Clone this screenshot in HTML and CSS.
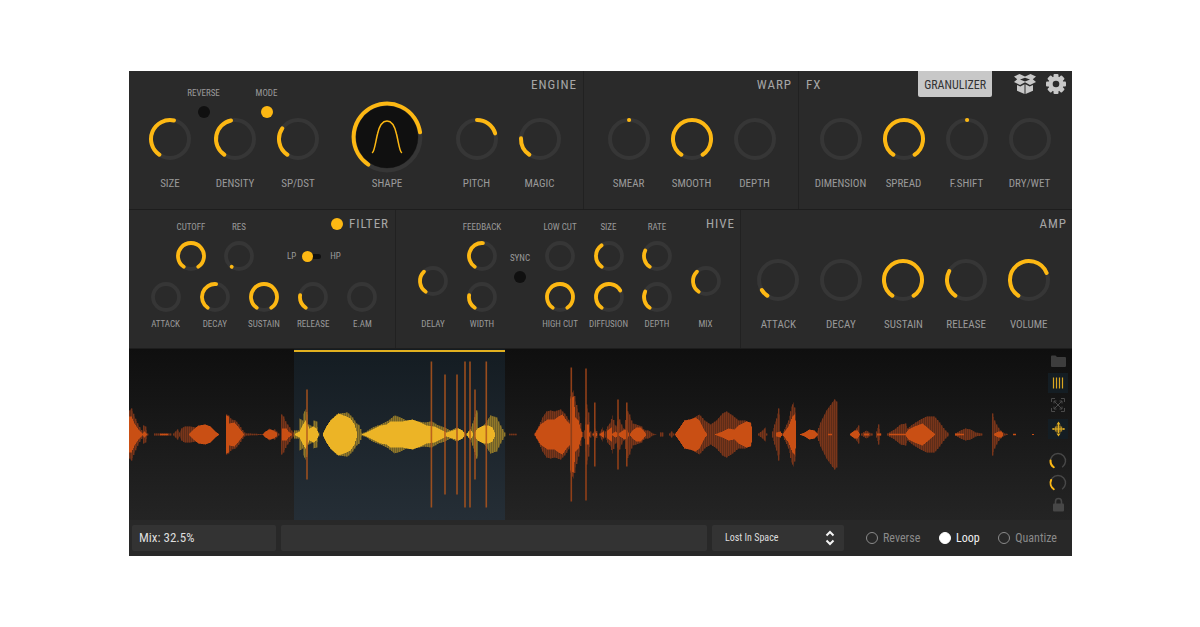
FILE: index.html
```html
<!DOCTYPE html>
<html lang="en">
<head>
<meta charset="utf-8">
<title>Granulizer</title>
<link rel="stylesheet" href="styles.css">
</head>
<body>
<main class="plugin">
  <div class="rack rack-top">
    <section class="module engine">
      <header class="module-head">
        <div class="toggles">
          <label class="toggle">REVERSE<input type="checkbox" class="led"></label>
          <label class="toggle">MODE<input type="checkbox" class="led" checked></label>
        </div>
        <h2 class="title">ENGINE</h2>
      </header>
      <div class="controls">
        <label class="control"><span class="dial"><input type="range" min="0" max="292" value="158"></span>SIZE</label>
        <label class="control"><span class="dial"><input type="range" min="0" max="292" value="134"></span>DENSITY</label>
        <label class="control"><span class="dial"><input type="range" min="0" max="292" value="90"></span>SP/DST</label>
        <label class="control"><span class="dial" data-kind="shape"><input type="range" min="0" max="292" value="228"></span>SHAPE</label>
        <label class="control"><span class="dial" data-origin="146"><input type="range" min="0" max="292" value="219"></span>PITCH</label>
        <label class="control"><span class="dial"><input type="range" min="0" max="292" value="58"></span>MAGIC</label>
      </div>
    </section>
    <section class="module warp">
      <header class="module-head"><h2 class="title">WARP</h2></header>
      <div class="controls">
        <label class="control"><span class="dial" data-origin="146"><input type="range" min="0" max="292" value="146"></span>SMEAR</label>
        <label class="control"><span class="dial"><input type="range" min="0" max="292" value="292"></span>SMOOTH</label>
        <label class="control"><span class="dial"><input type="range" min="0" max="292" value="0"></span>DEPTH</label>
      </div>
    </section>
    <section class="module fx">
      <header class="module-head">
        <h2 class="title">FX</h2>
        <nav class="menu">
          <button class="preset" type="button">GRANULIZER</button>
          <button class="icon-button" type="button" aria-label="Library">
            <svg width="24" height="24" viewBox="0 0 24 24">
              <path fill="#c8c8c8" d="M6.500 2 12 4.600 17.500 2 23 4.500 19.800 7.300 23 10 17 12.900 12 10.300 7 12.900 1 10 4.200 7.300 1 4.500zM12 5.800 7 7.600 12 9.600 17 7.600z"/>
              <path fill="#c8c8c8" d="M4 13 7.300 14.500 11.500 12.300V22L4 18.700zM20 13 16.700 14.500 12.500 12.300V22L20 18.700z"/>
            </svg>
          </button>
          <button class="icon-button" type="button" aria-label="Settings">
            <svg width="24" height="24" viewBox="-12 -12 24 24">
              <g fill="#c8c8c8">
                <rect x="-2.500" y="-10" width="5" height="20" rx="1"/>
                <rect x="-2.500" y="-10" width="5" height="20" rx="1" transform="rotate(45)"/>
                <rect x="-2.500" y="-10" width="5" height="20" rx="1" transform="rotate(90)"/>
                <rect x="-2.500" y="-10" width="5" height="20" rx="1" transform="rotate(135)"/>
                <circle r="7.600"/>
              </g>
              <circle r="3.300" fill="#2a2a2a"/>
            </svg>
          </button>
        </nav>
      </header>
      <div class="controls">
        <label class="control"><span class="dial"><input type="range" min="0" max="292" value="0"></span>DIMENSION</label>
        <label class="control"><span class="dial"><input type="range" min="0" max="292" value="292"></span>SPREAD</label>
        <label class="control"><span class="dial" data-origin="146"><input type="range" min="0" max="292" value="146"></span>F.SHIFT</label>
        <label class="control"><span class="dial"><input type="range" min="0" max="292" value="0"></span>DRY/WET</label>
      </div>
    </section>
  </div>

  <div class="rack rack-bottom">
    <section class="module filter">
      <div class="filter-upper">
        <label class="control small above"><span class="dial"><input type="range" min="0" max="292" value="292"></span>CUTOFF</label>
        <label class="control small above"><span class="dial" data-dot="yes"><input type="range" min="0" max="292" value="0"></span>RES</label>
        <div class="filter-side">
          <div class="filter-title">
            <input type="checkbox" class="led" checked aria-label="Filter on">
            <h2 class="title">FILTER</h2>
          </div>
          <label class="switch">LP<input type="checkbox" class="slide">HP</label>
        </div>
      </div>
      <div class="filter-lower">
        <label class="control small"><span class="dial"><input type="range" min="0" max="292" value="0"></span>ATTACK</label>
        <label class="control small"><span class="dial"><input type="range" min="0" max="292" value="151"></span>DECAY</label>
        <label class="control small"><span class="dial"><input type="range" min="0" max="292" value="292"></span>SUSTAIN</label>
        <label class="control small"><span class="dial"><input type="range" min="0" max="292" value="64"></span>RELEASE</label>
        <label class="control small"><span class="dial"><input type="range" min="0" max="292" value="0"></span>E.AM</label>
      </div>
    </section>
    <section class="module hive">
      <div class="hive-column single">
        <label class="control small tall"><span class="dial"><input type="range" min="0" max="292" value="102"></span>DELAY</label>
      </div>
      <div class="hive-column">
        <label class="control small above"><span class="dial"><input type="range" min="0" max="292" value="150"></span>FEEDBACK</label>
        <label class="control small"><span class="dial"><input type="range" min="0" max="292" value="64"></span>WIDTH</label>
      </div>
      <div class="hive-column sync">
        <label class="toggle">SYNC<input type="checkbox" class="led"></label>
      </div>
      <div class="hive-column">
        <label class="control small above"><span class="dial"><input type="range" min="0" max="292" value="0"></span>LOW CUT</label>
        <label class="control small"><span class="dial"><input type="range" min="0" max="292" value="292"></span>HIGH CUT</label>
      </div>
      <div class="hive-column">
        <label class="control small above"><span class="dial"><input type="range" min="0" max="292" value="111"></span>SIZE</label>
        <label class="control small"><span class="dial"><input type="range" min="0" max="292" value="206"></span>DIFFUSION</label>
      </div>
      <div class="hive-column">
        <label class="control small above"><span class="dial"><input type="range" min="0" max="292" value="81"></span>RATE</label>
        <label class="control small"><span class="dial"><input type="range" min="0" max="292" value="81"></span>DEPTH</label>
      </div>
      <div class="hive-column last">
        <h2 class="title">HIVE</h2>
        <label class="control small tall"><span class="dial"><input type="range" min="0" max="292" value="102"></span>MIX</label>
      </div>
    </section>
    <section class="module amp">
      <header class="module-head"><h2 class="title">AMP</h2></header>
      <div class="controls">
        <label class="control"><span class="dial"><input type="range" min="0" max="292" value="24"></span>ATTACK</label>
        <label class="control"><span class="dial"><input type="range" min="0" max="292" value="0"></span>DECAY</label>
        <label class="control"><span class="dial"><input type="range" min="0" max="292" value="292"></span>SUSTAIN</label>
        <label class="control"><span class="dial"><input type="range" min="0" max="292" value="84"></span>RELEASE</label>
        <label class="control"><span class="dial"><input type="range" min="0" max="292" value="214"></span>VOLUME</label>
      </div>
    </section>
  </div>

  <section class="sample" aria-label="Sample">
    <svg class="wave" viewBox="129 349 943 171" preserveAspectRatio="none">
      <defs>
        <linearGradient id="region" x1="0" y1="0" x2="0" y2="1">
          <stop offset="0" stop-color="#141c22"/><stop offset="1" stop-color="#252e36"/>
        </linearGradient>
      </defs>
      <rect x="294" y="349" width="211" height="171" fill="url(#region)"/>
      <rect x="294" y="350" width="211" height="2" fill="#e0b020"/>
      <path id="peak-fill" fill="#78351a" fill-opacity="0.55"/>
      <path id="peak" fill="#78351a"/>
      <path id="body" fill="#c94f14"/>
      <path id="peak-selected-fill" fill="#917829" fill-opacity="0.55"/>
      <path id="peak-selected" fill="#917829"/>
      <path id="body-selected" fill="#ecb426"/>
      <path id="spikes" fill="#8f3f18"/>
      <path id="spikes-selected" fill="#b0561c" fill-opacity="0.85"/>
    </svg>
    <div class="tools">
      <button class="tool" type="button" aria-label="Open">
        <svg width="20" height="20" viewBox="0 0 20 20"><path fill="#3d3d3d" d="M3 5.500q0-1 1-1h3.500l1.500 1.500H17q1 0 1 1v8q0 1-1 1H4q-1 0-1-1z"/></svg>
      </button>
      <button class="tool active" type="button" aria-label="Grains">
        <svg width="20" height="20" viewBox="0 0 20 20"><path stroke="#d9a520" stroke-width="1.200" d="M5.500 4.500v11M8.500 4.500v11M11.500 4.500v11M14.500 4.500v11"/></svg>
      </button>
      <button class="tool" type="button" aria-label="Fit">
        <svg width="20" height="20" viewBox="0 0 20 20"><path fill="none" stroke="#4a4a4a" d="M3.500 7V3.500H7M13 3.500h3.500V7M16.500 13v3.500H13M7 16.500H3.500V13M6 6l8 8M14 6l-8 8M6 8.500V6h2.500M11.500 6H14v2.500M14 11.500V14h-2.500M8.500 14H6v-2.500"/></svg>
      </button>
      <button class="tool active apart" type="button" aria-label="Scale">
        <svg width="20" height="20" viewBox="0 0 20 20"><path stroke="#a98525" stroke-width="1.300" d="M5.500 9v2M7.500 7.500v5M9 6.500v7M12 6.500v7M13.500 7.500v5M15.500 9v2"/><path fill="#e0ae22" d="M8.500 5.500 10.500 2.500 12.500 5.500zM8.500 14.500l2 3 2-3zM9.900 5h1.200v10H9.900z"/><path stroke="#e0ae22" d="M4 10h13"/></svg>
      </button>
      <label class="tool far"><span class="dial" data-kind="mini"><input type="range" min="0" max="292" value="60" aria-label="Attack shape"></span></label>
      <label class="tool"><span class="dial" data-kind="mini"><input type="range" min="0" max="292" value="80" aria-label="Release shape"></span></label>
      <button class="tool" type="button" aria-label="Lock">
        <svg width="20" height="20" viewBox="0 0 20 20"><rect x="5" y="8.500" width="11" height="8" rx="1" fill="#474747"/><path fill="none" stroke="#474747" stroke-width="1.600" d="M7.500 9V6.500a3 3 0 0 1 6 0V9"/></svg>
      </button>
    </div>
  </section>

  <footer class="status">
    <output class="field readout">Mix: 32.5%</output>
    <input class="field message" type="text" aria-label="Message" readonly>
    <div class="picker">
      <select class="field" aria-label="Preset"><option>Lost In Space</option></select>
      <svg class="chevrons" width="10" height="16" viewBox="0 0 10 16"><path fill="none" stroke="#f4f4f4" stroke-width="2" d="M1.500 5.500 5 2l3.500 3.500M1.500 10.500 5 14l3.500-3.500"/></svg>
    </div>
    <div class="playback">
      <label class="choice"><input type="radio" name="playback" class="round">Reverse</label>
      <label class="choice on"><input type="radio" name="playback" class="round" checked>Loop</label>
      <label class="choice"><input type="radio" name="playback" class="round">Quantize</label>
    </div>
  </footer>
</main>
<script src="script.js"></script>
</body>
</html>
```
FILE: styles.css
```css
* { box-sizing: border-box; }

body {
  margin: 0;
  padding: 71px 128px 71px 129px;
  background: #fff;
  color: #9a9a9a;
  font-family: "Liberation Sans Narrow", "Roboto Condensed", "Open Sans Condensed", "Liberation Sans", sans-serif;
  font-size: 11px;
  line-height: 14px;
}

button, input, select, output { font: inherit; color: inherit; margin: 0; }
button { border: 0; padding: 0; background: none; display: block; }
svg { display: block; }

.plugin { background: #2a2a2a; }

.rack { display: grid; border-bottom: 1px solid #1d1d1d; }
.rack-top { grid-template-columns: 455fr 215fr 273fr; }
.rack-bottom { grid-template-columns: 267fr 345fr 331fr; }

.module { min-width: 0; min-height: 138px; border-right: 1px solid #212121; }
.module:last-child { border-right: 0; }

.module-head {
  display: flex;
  justify-content: space-between;
  height: 47px;
  padding: 0 6px;
}
.warp .module-head, .amp .module-head { justify-content: flex-end; }
.fx .module-head { padding: 0 4px 0 7px; }
.amp .module-head { height: 49px; padding-right: 5px; }

.title {
  margin: 6px 0 0;
  font-size: 13px;
  font-weight: 400;
  line-height: 16px;
  letter-spacing: 1px;
  color: #a6a6a6;
}

.controls { display: grid; justify-items: center; }
.engine .controls { grid-template-columns: 82fr 48fr 78fr 100fr 79fr 47fr 20fr; }
.warp .controls { grid-template-columns: repeat(3, 63fr); padding: 0 12px 0 13px; }
.fx .controls { grid-template-columns: repeat(4, 63fr); padding: 0 11px 0 10px; }
.amp .controls { grid-template-columns: repeat(5, 63fr); padding: 0 12px 0 6px; }

.control {
  display: flex;
  flex-direction: column;
  align-items: center;
  gap: 17px;
  width: 0;
  white-space: nowrap;
}
.engine .control, .warp .control, .fx .control, .amp .control { gap: 18px; }

.dial {
  position: relative;
  display: flex;
  align-items: center;
  justify-content: center;
  width: 42px;
  height: 41px;
  flex: none;
}
.dial svg { flex: none; }
.dial input {
  position: absolute;
  inset: 0;
  width: 100%;
  height: 100%;
  opacity: 0;
}
.dial[data-kind="shape"] svg { margin-bottom: 4px; }
.dial[data-kind="mini"] { width: 20px; height: 20px; }

.track { fill: none; stroke: #363636; }
.dial[data-kind="mini"] .track { stroke: #484848; }
.arc { fill: none; stroke: #fdb813; stroke-linecap: round; }

.small { font-size: 9px; line-height: 12px; gap: 6px; }
.small .dial { width: 30px; height: 30px; }
.above { flex-direction: column-reverse; gap: 8px; }

.toggles { display: flex; padding: 16px 0 0 37px; }
.toggle {
  display: flex;
  flex-direction: column;
  align-items: center;
  gap: 7px;
  font-size: 9px;
  line-height: 12px;
}
.toggles .toggle { width: 63px; }
.led {
  appearance: none;
  width: 12px;
  height: 12px;
  border-radius: 50%;
  background: #101010;
}
.led:checked { background: #fdb813; }

.menu { display: flex; align-items: flex-start; gap: 7px; }
.preset {
  height: 26px;
  padding: 2px 6px 0;
  margin-right: 14px;
  border-radius: 0 0 2px 2px;
  background: #c8c8c8;
  color: #333;
  font-size: 12px;
}
.icon-button { width: 24px; height: 24px; margin-top: 1px; }

.filter-upper {
  display: grid;
  grid-template-columns: 48fr 48fr 128fr;
  justify-items: center;
  padding: 11px 4px 0 38px;
}
.filter-lower {
  display: grid;
  grid-template-columns: repeat(5, 49fr);
  justify-items: center;
  padding: 11px 8px 0 12px;
}
.filter-side { justify-self: stretch; }
.filter-title { display: flex; justify-content: flex-end; align-items: center; gap: 6px; margin-top: -5px; padding-right: 2px; }
.filter-title .title { margin: 0; }
.switch {
  display: flex;
  align-items: center;
  gap: 6px;
  margin: 18px 0 0 24px;
  font-size: 9px;
  line-height: 12px;
}
.slide {
  appearance: none;
  display: flex;
  align-items: center;
  width: 19px;
  height: 5px;
  margin-right: 3px;
  border-radius: 3px;
  background: #101010;
}
.slide::before {
  content: "";
  flex: none;
  width: 11px;
  height: 11px;
  border-radius: 50%;
  background: #fdb813;
}
.slide:checked { justify-content: flex-end; }

.hive {
  display: grid;
  grid-template-columns:
    minmax(0, 54fr) minmax(0, 44fr) minmax(0, 32fr) minmax(0, 48fr)
    minmax(0, 49fr) minmax(0, 48fr) minmax(0, 49fr);
  padding: 11px 10px 0 10px;
}
.hive-column {
  display: flex;
  flex-direction: column;
  align-items: center;
  gap: 11px;
}
.hive .tall { gap: 22px; }
.single { padding-top: 45px; }
.hive .last { gap: 34px; }
.last .title { margin: -5px -5px 0 0; align-self: flex-end; }
.sync { padding-top: 31px; }

.sample {
  display: grid;
  grid-template-columns: 100%;
  background: linear-gradient(#0f0f0f, #242424);
}
.wave { grid-area: 1 / 1; width: 100%; height: 171px; }
.tools {
  grid-area: 1 / 1;
  justify-self: end;
  display: flex;
  flex-direction: column;
  gap: 2px;
  padding: 2px 4px 0 0;
}
.tool { width: 20px; height: 20px; }
.active { background: #141d23; }
.apart { margin-top: 2px; }
.far { margin-top: 10px; }

.status {
  display: grid;
  grid-template-columns: 144fr 426fr 132fr 223fr;
  gap: 5px;
  padding: 5px 0 5px 3px;
  background: #282828;
}
.field {
  display: block;
  width: 100%;
  min-width: 0;
  height: 26px;
  padding: 0 7px;
  border: 0;
  border-radius: 2px;
  background: #333;
  color: #dedede;
  line-height: 26px;
}
.readout { font-size: 13px; }
.picker { display: grid; align-items: center; }
.picker .field { grid-area: 1 / 1; appearance: none; padding: 0 13px; font-size: 10px; }
.chevrons { grid-area: 1 / 1; justify-self: end; margin-right: 9px; pointer-events: none; }
.playback {
  display: flex;
  align-items: center;
  justify-content: space-between;
  padding: 0 15px 0 17px;
  font-size: 12px;
}
.choice { display: flex; align-items: center; gap: 5px; color: #8a8a8a; }
.on { color: #f0f0f0; }
.round {
  appearance: none;
  width: 12px;
  height: 12px;
  border: 1px solid #8a8a8a;
  border-radius: 50%;
}
.round:checked { border-color: #fff; background: #fff; }
```
FILE: script.js
```js
const START = 124;
const SWEEP = 292;
const sizes = {
  large: { box: 44, r: 19, width: 4 },
  small: { box: 32, r: 13, width: 3.8 },
  shape: { box: 72, r: 33.4, width: 4 },
  mini: { box: 20, r: 7.5, width: 1.4 }
};

function point(r, degrees) {
  const a = degrees * Math.PI / 180;
  return (r * Math.cos(a)).toFixed(2) + " " + (r * Math.sin(a)).toFixed(2);
}

function arc(r, from, to) {
  return `M${point(r, START + from)}A${r} ${r} 0 ${to - from > 180 ? 1 : 0} 1 ${point(r, START + to)}`;
}

function drawDial(dial) {
  const old = dial.querySelector("svg");
  if (old) old.remove();
  const kind = dial.dataset.kind || (dial.closest(".small") ? "small" : "large");
  const { box, r, width } = sizes[kind];
  const value = Number(dial.querySelector("input").value);
  const origin = Number(dial.dataset.origin || 0);
  let art = kind === "mini"
    ? `<path class="track" stroke-width="${width}" d="${arc(r, 0, SWEEP)}"/>`
    : `<circle class="track" r="${r}" stroke-width="${width}"/>`;
  if (kind === "shape") {
    art += `<circle r="31" fill="#101010"/><path fill="none" stroke="#fdb813" stroke-width="1.5" stroke-linecap="round" d="M-14.5 15.5C-12.5 14-11.5 5-9.5-3C-7.5-12-5-16 0-16S7.5-12 9.5-3C11.5 5 12.5 14 14.5 15.5"/>`;
  }
  if (value !== origin || dial.dataset.origin || dial.dataset.dot) {
    const low = Math.min(value, origin);
    const high = Math.max(value, origin, low + 0.5);
    art += `<path class="arc" stroke-width="${kind === "mini" ? 2 : width}" d="${arc(r, low, high)}"/>`;
  }
  dial.insertAdjacentHTML("afterbegin",
    `<svg width="${box}" height="${box}" viewBox="${-box / 2} ${-box / 2} ${box} ${box}">${art}</svg>`);
}

document.querySelectorAll(".dial").forEach(dial => {
  drawDial(dial);
  dial.querySelector("input").addEventListener("input", () => drawDial(dial));
});

/* Waveform envelopes: runs of x, half height. */
const peak = [
  [129,24, 131,26, 134,18, 138,9, 142,3, 143,9, 145,8, 147,1],
  [154,1, 170,1],
  [173,1, 177,5, 179,2, 181,6, 184,8, 190,8, 195,7],
  [226,20, 228,19, 231,15, 235,14, 239,9, 243,3, 245,1, 262,0.5],
  [264,2, 269,6, 273,4, 274,5, 278,1],
  [281,20, 283,18, 286,11, 288,9, 291,4, 294,1],
  [509,0.7, 516,0.7],
  [534,1, 538,8, 542,17, 546,23, 550,24, 554,23, 560,25, 565,20, 569,13, 570,38, 573,44, 575,33, 577,26, 579,18, 581,5, 583,0],
  [584,4, 586,30, 588,22, 590,3],
  [592,1, 595,6, 597,1], [599,1, 602,7, 604,1],
  [605,3, 607,8, 610,12, 612,19, 614,10, 616,8, 618,18, 620,12, 624,4, 626,25, 629,20, 632,11, 636,10, 641,8, 644,4, 648,4, 652,1, 656,0],
  [660,2, 662,2], [669,1, 671,3, 673,1],
  [676,2, 684,14, 692,16, 699,20, 704,14, 710,10, 716,14, 722,21, 726,23, 732,19, 738,14, 745,14, 750,11, 751,8],
  [758,1, 762,4, 765,7, 766,1],
  [772,3, 774,10, 776,16, 778,26, 779,20],
  [782,1, 788,14, 791,28, 793,32, 795,22],
  [816,1, 820,12, 826,24, 831,31, 834,35, 836,33],
  [852,1, 856,6, 858,9], [861,1, 866,4, 870,1, 872,1], [876,3, 878,10, 880,1],
  [887,1, 894,5, 900,10, 905,11, 907,6, 912,10, 920,15, 926,18, 934,18, 939,12, 944,5, 948,1],
  [955,1, 960,4, 965,6, 970,5, 975,2, 981,1],
  [992,21, 994,14, 997,8, 1000,4, 1004,1, 1007,0.5]
];
const body = [
  [129,18, 131,18, 134,11, 138,5, 142,1, 144,3, 147,0],
  [160,0.7, 167,0.7],
  [188,0, 193,5, 198,9, 205,10, 210,8, 215,3, 219,0],
  [226,19, 228,18, 229,11, 234,12, 239,6, 243,1],
  [262,0, 265,3, 269,5, 273,4, 276,2], [282,6, 286,6, 288,3, 291,1],
  [534,0, 540,10, 547,15, 554,15, 558,18, 562,20, 566,14, 569,11, 570,36, 573,38, 575,17, 578,14, 580,6, 582,0],
  [585,10, 588,10, 589,2], [592,0, 595,3, 597,0], [600,1, 603,3],
  [607,4, 611,7, 612,1, 615,3, 618,1, 621,3, 624,5, 627,4, 629,0, 632,4, 636,7, 640,7, 643,4, 646,0],
  [675,1, 680,8, 684,14, 690,15, 695,17, 699,14, 704,4, 707,0],
  [714,0, 722,3, 728,6, 734,5, 738,9, 746,13, 750,12, 751,8],
  [776,2, 780,3, 782,0], [782,0, 788,8, 792,18, 794,20, 795,14],
  [799,0, 804,2, 809,5, 814,4, 818,0], [828,0.7, 831,0.7],
  [850,1, 854,4, 857,4, 859,1], [877,1, 880,1], [864,1, 868,1],
  [889,0.7, 905,0.8, 908,5, 914,8, 922,11, 928,6, 935,0],
  [955,1, 963,0.7], [994,1, 998,3, 1001,3, 1003,0], [1013,0.7, 1015,0.7], [1032,0.5, 1033,0.5]
];
const peakSelected = [
  [294,4, 298,4, 299,16, 302,14, 303,21, 305,25, 307,20, 308,10, 312,8, 313,14, 316,13, 318,2],
  [322,0, 326,8, 330,14, 336,20, 339,21, 347,22, 352,17, 356,11, 359,9, 361,2],
  [361,1, 366,3, 372,7, 380,10, 388,14, 394,19, 400,17, 406,14, 412,14, 418,13, 424,12, 431,13, 438,9, 444,7, 450,4, 456,7, 460,5, 464,2],
  [466,1, 470,5, 473,14, 476,24, 477,22, 478,6],
  [484,10, 486,13, 490,19, 496,17, 500,9, 504,2, 505,0]
];
const bodySelected = [
  [295,1, 299,3, 302,9, 305,14, 309,6, 313,8, 316,6, 318,1],
  [322,0, 326,8, 330,14, 338,21, 346,18, 350,16, 354,10, 357,0],
  [361,0, 366,2, 372,5, 380,9, 386,10, 390,13, 402,13, 412,15, 420,12, 426,9, 434,8, 440,5, 446,2, 452,4, 458,6, 462,4, 464,1],
  [466,0, 468,3, 470,5, 472,2], [475,3, 477,6, 483,9, 488,9, 492,7, 495,0]
];

const MIDDLE = 434.5;

function heightAt(run, x) {
  for (let i = 2; i < run.length; i += 2) {
    if (x <= run[i]) {
      const t = (x - run[i - 2]) / (run[i] - run[i - 2]);
      return run[i - 1] + t * (run[i + 1] - run[i - 1]);
    }
  }
  return 0;
}

function bars(runs, step, width) {
  let d = "";
  for (const run of runs) {
    for (let x = run[0]; x <= run[run.length - 2]; x += step) {
      const h = x === run[0] ? run[1] : heightAt(run, x);
      if (h > 0.2) d += `M${x} ${(MIDDLE - h).toFixed(1)}h${width}v${(2 * h).toFixed(1)}h-${width}z`;
    }
  }
  return d;
}

function spikes(list) {
  return list.map(([x, h]) => `M${x - 0.8} ${MIDDLE - h}h1.6v${2 * h}h-1.6z`).join("");
}

function setPath(id, d) {
  document.getElementById(id).setAttribute("d", d);
}

setPath("peak-fill", bars(peak, 1, 1));
setPath("peak", bars(peak, 2, 1.4));
setPath("body", bars(body, 1, 1));
setPath("peak-selected-fill", bars(peakSelected, 1, 1));
setPath("peak-selected", bars(peakSelected, 2, 1.4));
setPath("body-selected", bars(bodySelected, 1, 1));
setPath("spikes", spikes([[571.3, 67], [586, 66], [594.8, 32], [618, 35], [626.8, 32]]));
setPath("spikes-selected",
  spikes([[307, 45], [431.4, 73], [445, 60], [457, 60], [465, 73], [470, 73], [475, 45], [486.3, 73]]));
```
